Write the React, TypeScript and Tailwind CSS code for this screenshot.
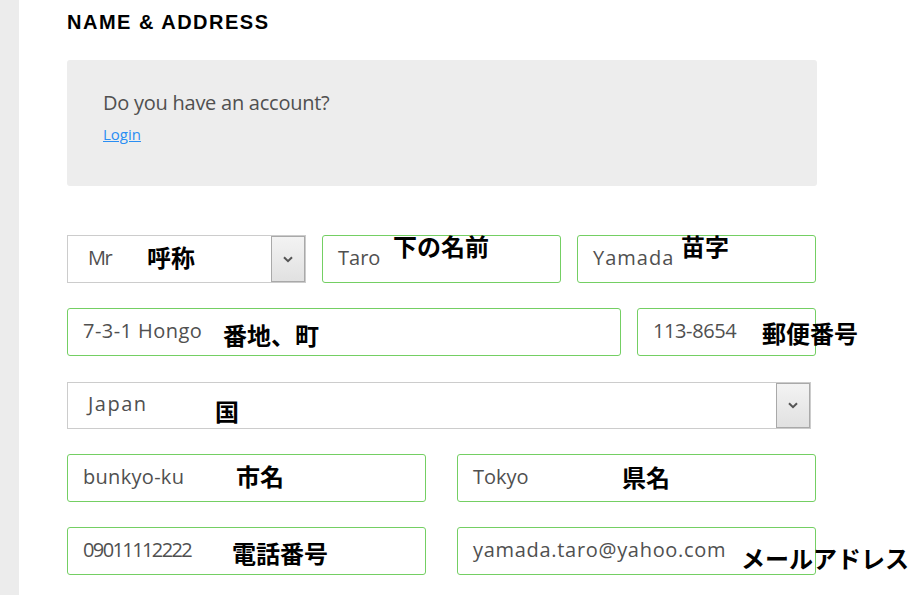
import React from "react";

const inputFont = { fontFamily: '"Open Sans", "Noto Sans", sans-serif' };

function Field({
  value,
  className = "",
  tracking = "tracking-[0px]",
}: {
  value: string;
  className?: string;
  tracking?: string;
}) {
  return (
    <div
      className={`flex h-[48px] items-center rounded-[3px] border border-[#74cf63] bg-white pl-[15px] pb-[3px] text-[20px] text-[#505050] ${tracking} ${className}`}
      style={inputFont}
    >
      {value}
    </div>
  );
}

function SelectBox({
  value,
  className = "",
  tracking = "tracking-[0px]",
}: {
  value: string;
  className?: string;
  tracking?: string;
}) {
  return (
    <div
      className={`flex h-[48px] items-center border border-[#cccccc] bg-white text-[20px] text-[#505050] ${className}`}
      style={inputFont}
    >
      <span className={`flex-1 pl-[20px] pb-[3px] ${tracking}`}>{value}</span>
      <span className="flex h-full w-[34px] items-center justify-center border border-[#a9a9a9] bg-gradient-to-b from-[#f3f3f3] to-[#e1e1e1]">
        <svg width="10" height="7" viewBox="0 0 10 7">
          <path d="M1 1.2 L5 5.2 L9 1.2" fill="none" stroke="#555" strokeWidth="2" />
        </svg>
      </span>
    </div>
  );
}

type Note = { text: string; x: number; y: number };

// annotation labels laid over the form
const notes: Note[] = [
  { text: "呼称", x: 147, y: 245 },
  { text: "下の名前", x: 393, y: 234 },
  { text: "苗字", x: 681, y: 234 },
  { text: "番地、町", x: 223, y: 323 },
  { text: "郵便番号", x: 762, y: 321 },
  { text: "国", x: 215, y: 399 },
  { text: "市名", x: 236, y: 464 },
  { text: "県名", x: 622, y: 465 },
  { text: "電話番号", x: 232, y: 541 },
  { text: "メールアドレス", x: 741, y: 546 },
];

export default function App() {
  return (
    <div className="relative flex h-[595px] w-[910px] overflow-hidden bg-white">
      <div className="w-[19px] shrink-0 bg-[#ececec]" />
      <div className="box-content w-[750px] shrink-0 pl-[48px]">
        <h2
          className="mt-[10px] text-[20px] font-bold uppercase leading-[25px] tracking-[1.5px] text-black"
          style={{ fontFamily: '"Liberation Sans", Arial, sans-serif' }}
        >
          NAME &amp; ADDRESS
        </h2>

        <div
          className="mt-[25px] h-[126px] rounded-[3px] bg-[#ededed] px-[36px] pt-[29px]"
          style={inputFont}
        >
          <p className="text-[20px] leading-[28px] tracking-[-0.25px] text-[#505050]">
            Do you have an account?
          </p>
          <a
            href="#"
            className="mt-[7px] block text-[15px] leading-[20px] text-[#2a8ef3] underline"
          >
            Login
          </a>
        </div>

        <div className="mt-[49px] flex flex-col gap-[25px]">
          <div className="flex gap-[16px]">
            <SelectBox value="Mr" className="w-[239px]" tracking="tracking-[-1.5px]" />
            <Field value="Taro" className="w-[239px]" />
            <Field value="Yamada" className="w-[239px]" tracking="tracking-[1px]" />
          </div>
          <div className="flex gap-[16px]">
            <Field value="7-3-1 Hongo" className="w-[554px]" tracking="tracking-[0.45px]" />
            <Field value="113-8654" className="w-[179px]" tracking="tracking-[-0.4px]" />
          </div>
          <div className="mt-[1px] flex">
            <SelectBox value="Japan" className="!h-[47px] w-[744px]" tracking="tracking-[1.5px]" />
          </div>
          <div className="flex gap-[31px]">
            <Field value="bunkyo-ku" className="w-[359px]" tracking="tracking-[0.3px]" />
            <Field value="Tokyo" className="w-[359px]" />
          </div>
          <div className="flex gap-[31px]">
            <Field value="09011112222" className="w-[359px]" tracking="tracking-[-1.6px]" />
            <Field value="yamada.taro@yahoo.com" className="w-[359px]" tracking="tracking-[0.7px]" />
          </div>
        </div>
      </div>

      {notes.map((n) => (
        <div
          key={n.text}
          className="absolute whitespace-nowrap text-[24px] font-bold leading-[24px] text-black"
          style={{ left: n.x, top: n.y, fontFamily: '"Noto Sans CJK JP", sans-serif' }}
        >
          {n.text}
        </div>
      ))}
    </div>
  );
}
